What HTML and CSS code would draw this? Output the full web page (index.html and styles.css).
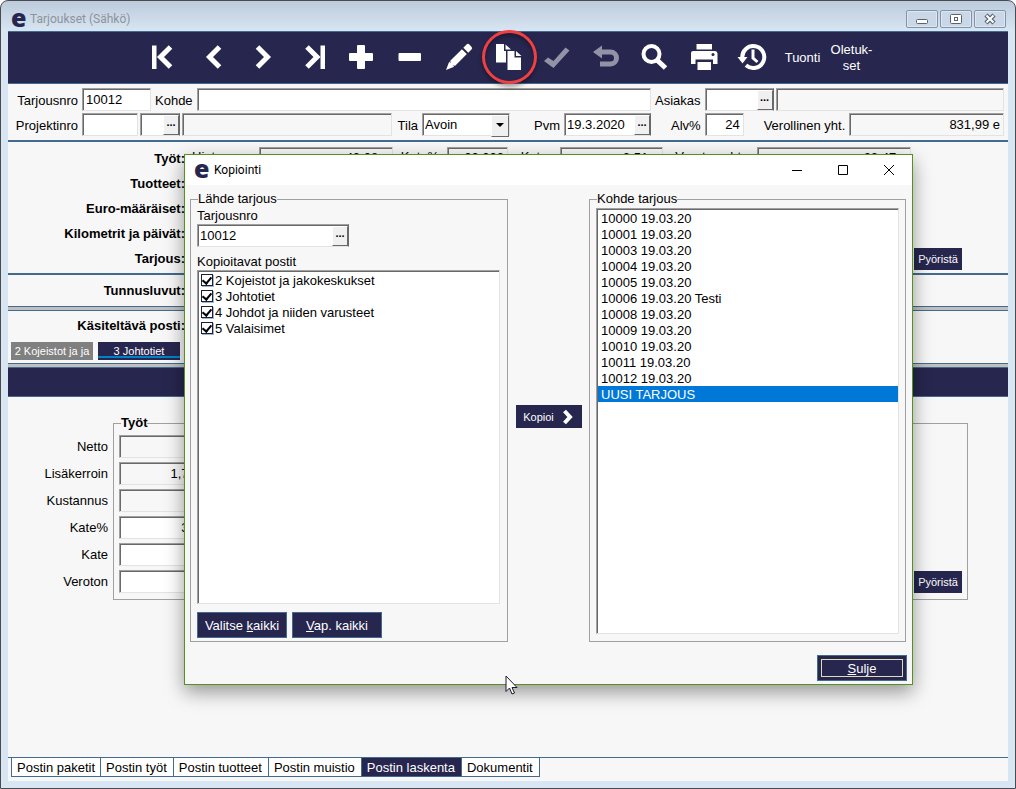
FILE: index.html
```html
<!DOCTYPE html>
<html lang="fi">
<head>
  <meta charset="UTF-8">
  <meta name="viewport" content="width=device-width, initial-scale=1">
  <title>Tarjoukset (Sähkö)</title>
  <link rel="stylesheet" href="styles.css">
</head>
<body>
  <div class="window">
    <header class="titlebar">
      <span class="logo">e</span>
      <h1>Tarjoukset (Sähkö)</h1>
      <div class="window-buttons">
        <button type="button" aria-label="Pienennä"><svg width="30" height="16" viewBox="0 0 30 16"><rect x="9.500" y="8.500" width="11" height="4" rx="1" fill="#fff" stroke="#5a6270"/></svg></button>
        <button type="button" aria-label="Suurenna"><svg width="30" height="16" viewBox="0 0 30 16"><rect x="9.500" y="3.500" width="11" height="9" rx="1" fill="#fff" stroke="#5a6270"/><rect x="13.500" y="6.500" width="3" height="3" fill="#fff" stroke="#5a6270"/></svg></button>
        <button type="button" aria-label="Sulje ikkuna"><svg width="30" height="16" viewBox="0 0 30 16"><path d="M11 4l8 8M19 4l-8 8" stroke="#5a6270" stroke-width="4.500"/><path d="M11.500 4.500l7 7M18.500 4.500l-7 7" stroke="#fff" stroke-width="2"/></svg></button>
      </div>
    </header>

    <nav class="toolbar">
      <button type="button" aria-label="Ensimmäinen"><svg viewBox="0 0 49 51"><path d="M11 13.500h4.500v23.500H11z"/><path class="line" d="M29.500 15l-10 10 10 10"/></svg></button>
      <button type="button" aria-label="Edellinen"><svg viewBox="0 0 49 51"><path class="line" d="M29.500 15l-10 10 10 10"/></svg></button>
      <button type="button" aria-label="Seuraava"><svg viewBox="0 0 49 51"><path class="line" d="M18.500 15l10 10-10 10"/></svg></button>
      <button type="button" aria-label="Viimeinen"><svg viewBox="0 0 49 51"><path class="line" d="M19 15l10 10-10 10"/><path d="M32.500 13.500H37V37h-4.500z"/></svg></button>
      <button type="button" aria-label="Lisää"><svg viewBox="0 0 49 51"><rect x="12" y="21" width="24" height="8" rx="1"/><rect x="20" y="13" width="8" height="24" rx="1"/></svg></button>
      <button type="button" aria-label="Poista"><svg viewBox="0 0 49 51"><rect x="12.500" y="21" width="22.500" height="8" rx="1"/></svg></button>
      <button type="button" aria-label="Muokkaa"><svg viewBox="0 0 49 51"><g transform="translate(11 38) rotate(-45)"><path d="M0 0l8-3.500v2l1.500-2H26v7H9.500L8 1.500v2z"/><path d="M28-3.500h4.500q2 0 2 2v3q0 2-2 2H28z"/></g></svg></button>
      <button type="button" aria-label="Kopioi tarjous"><svg viewBox="0 0 49 51"><path d="M12 12h8v7h2v11.500H12z"/><path d="M21.500 12.500l5.500 5h-5.500z"/><path d="M23.500 19h7v6.500h6.500V38H23.500z"/><path d="M32 19l5.500 5H32z"/></svg><span class="ring"></span></button>
      <button type="button" class="dim" aria-label="Tallenna"><svg viewBox="0 0 49 51"><path d="M11 29l4-3.500 5.500 3.500L32.500 15.500l4 3L20.500 36z"/></svg></button>
      <button type="button" class="dim" aria-label="Kumoa"><svg viewBox="0 0 49 51"><path d="M11 20l9-6.500v13z"/><path class="line" d="M18 20h10.500a6 6 0 0 1 0 12H18"/></svg></button>
      <button type="button" aria-label="Hae"><svg viewBox="0 0 49 51"><circle class="line thin" cx="20.500" cy="22" r="8"/><path class="line" d="M26.500 28.500l8 7.500"/></svg></button>
      <button type="button" aria-label="Tulosta"><svg viewBox="0 0 49 51"><path d="M16.500 12h15.500v5.500H16.500z"/><path d="M13 19h21.500a3 3 0 0 1 3 3v10h-4.500v-4.500H15.500V32H11V21a2 2 0 0 1 2-2z"/><path d="M17.500 30h13.500v8H17.500z"/><circle class="hole" cx="33" cy="22.500" r="1.500"/></svg></button>
      <button type="button" aria-label="Historia"><svg viewBox="0 0 49 51"><path class="line thin" d="M13.300 26a11 11 0 1 1 3.700 7.300"/><path d="M8.500 25h10l-5 6.500z"/><path class="line hand" d="M24 17.500v8.500l4.500 4"/></svg></button>
      <button type="button">Tuonti</button>
      <button type="button">Oletuk-<br>set</button>
    </nav>

    <form class="offer">
      <div class="offer-row">
        <label class="first" for="tarjousnro">Tarjousnro</label>
        <input class="field w-nro" id="tarjousnro" type="text" value="10012">
        <label for="kohde">Kohde</label>
        <input class="field grow" id="kohde" type="text">
        <div class="offer-right">
          <label for="asiakas">Asiakas</label>
          <span class="field pick w-nro"><input id="asiakas" type="text"><button type="button" aria-label="Valitse asiakas">...</button></span>
          <input class="field readonly grow snug" type="text" aria-label="Asiakkaan nimi" readonly>
        </div>
      </div>
      <div class="offer-row">
        <label class="first" for="projektinro">Projektinro</label>
        <input class="field w-prj" id="projektinro" type="text">
        <span class="field pick w-sub snug"><input type="text" aria-label="Alaprojekti"><button type="button" aria-label="Valitse projekti">...</button></span>
        <input class="field readonly grow snug" type="text" aria-label="Projektin nimi" readonly>
        <label class="lead-s" for="tila">Tila</label>
        <span class="drop"><select class="field" id="tila"><option>Avoin</option></select></span>
        <label class="lead-l" for="pvm">Pvm</label>
        <span class="field pick w-date"><input id="pvm" type="text" value="19.3.2020"><button type="button" aria-label="Valitse päivä">...</button></span>
        <div class="offer-right">
          <label class="lead-m" for="alv">Alv%</label>
          <input class="field num w-alv" id="alv" type="text" value="24">
          <label class="lead-m" for="yht">Verollinen yht.</label>
          <input class="field readonly num grow" id="yht" type="text" value="831,99 e" readonly>
        </div>
      </div>
    </form>

    <section class="totals">
      <div class="total-row">
        <b>Työt:</b>
        <label for="t1">Hinta</label><input class="field readonly num" id="t1" type="text" value="40,08 e" readonly>
        <label for="t2">Kate%</label><input class="field readonly num" id="t2" type="text" value="20,000" readonly>
        <label for="t3">Kate</label><input class="field readonly num" id="t3" type="text" value="2,51 e" readonly>
        <label for="t4">Veroton yht.</label><input class="field readonly num" id="t4" type="text" value="22,47 e" readonly>
      </div>
      <div class="total-row"><b>Tuotteet:</b></div>
      <div class="total-row"><b>Euro-määräiset:</b></div>
      <div class="total-row"><b>Kilometrit ja päivät:</b></div>
      <div class="total-row wide"><b>Tarjous:</b><button type="button" class="btn small">Pyöristä</button></div>
    </section>

    <section class="keys"><b>Tunnusluvut:</b></section>
    <div class="splitter"></div>

    <section class="current">
      <b>Käsiteltävä posti:</b>
      <div class="post-tabs">
        <button type="button">2 Kojeistot ja ja</button>
        <button type="button" class="active">3 Johtotiet</button>
      </div>
    </section>
    <div class="splitter"></div>
    <div class="band"></div>

    <section class="calc">
      <div class="calc-labels">
        <label for="netto">Netto</label>
        <label for="kerroin">Lisäkerroin</label>
        <label for="kustannus">Kustannus</label>
        <label for="katepros">Kate%</label>
        <label for="kate">Kate</label>
        <label for="veroton">Veroton</label>
      </div>
      <fieldset class="calc-work">
        <legend>Työt</legend>
        <input class="field readonly num" id="netto" type="text" readonly>
        <input class="field readonly num" id="kerroin" type="text" value="1,700" readonly>
        <input class="field readonly num" id="kustannus" type="text" readonly>
        <input class="field num" id="katepros" type="text" value="300">
        <input class="field num" id="kate" type="text">
        <input class="field num" id="veroton" type="text">
      </fieldset>
      <div class="calc-sum"><button type="button" class="btn small">Pyöristä</button></div>
    </section>

    <nav class="bottom-tabs">
      <a href="#">Postin paketit</a>
      <a href="#">Postin työt</a>
      <a href="#">Postin tuotteet</a>
      <a href="#">Postin muistio</a>
      <a href="#" class="active">Postin laskenta</a>
      <a href="#">Dokumentit</a>
    </nav>
  </div>

  <!-- Kopiointi-ikkuna -->
  <div class="dialog" role="dialog" aria-label="Kopiointi">
    <div class="dialog-title">
      <span class="logo">e</span>
      <h2>Kopiointi</h2>
      <button type="button" aria-label="Pienennä"><svg width="12" height="12" viewBox="0 0 12 12"><path d="M1 6.500h10"/></svg></button>
      <button type="button" aria-label="Suurenna"><svg width="12" height="12" viewBox="0 0 12 12"><path d="M1.500 1.500h9v9h-9z"/></svg></button>
      <button type="button" aria-label="Sulje ikkuna"><svg width="12" height="12" viewBox="0 0 12 12"><path d="M1 1l10 10M11 1L1 11"/></svg></button>
    </div>
    <div class="dialog-body">
      <fieldset class="source">
        <legend>Lähde tarjous</legend>
        <label for="lahde">Tarjousnro</label>
        <span class="field pick w-src"><input id="lahde" type="text" value="10012"><button type="button" aria-label="Valitse tarjous">...</button></span>
        <p>Kopioitavat postit</p>
        <div class="field checklist">
          <label><input type="checkbox" checked>2 Kojeistot ja jakokeskukset</label>
          <label><input type="checkbox" checked>3 Johtotiet</label>
          <label><input type="checkbox" checked>4 Johdot ja niiden varusteet</label>
          <label><input type="checkbox" checked>5 Valaisimet</label>
        </div>
        <div class="source-buttons">
          <button type="button" class="btn">Valitse <u>k</u>aikki</button>
          <button type="button" class="btn"><u>V</u>ap. kaikki</button>
        </div>
      </fieldset>
      <button type="button" class="btn small copy">Kopioi <svg width="12" height="16" viewBox="0 0 12 16"><path d="M2.500 2L8 8l-5.500 6" fill="none" stroke="#fff" stroke-width="4"/></svg></button>
      <fieldset class="target">
        <legend>Kohde tarjous</legend>
        <select class="field" size="12" aria-label="Kohde tarjous">
          <option>10000 19.03.20</option>
          <option>10001 19.03.20</option>
          <option>10003 19.03.20</option>
          <option>10004 19.03.20</option>
          <option>10005 19.03.20</option>
          <option>10006 19.03.20 Testi</option>
          <option>10008 19.03.20</option>
          <option>10009 19.03.20</option>
          <option>10010 19.03.20</option>
          <option>10011 19.03.20</option>
          <option>10012 19.03.20</option>
          <option selected>UUSI TARJOUS</option>
        </select>
      </fieldset>
    </div>
    <div class="dialog-footer">
      <button type="button" class="btn default"><u>S</u>ulje</button>
    </div>
  </div>

  <svg class="cursor" width="13" height="20" viewBox="0 0 13 20"><path d="M1 1v15.500l3.500-3.500 2.500 6 2.500-1-2.500-5.500h5z" fill="#fff" stroke="#1a1a2a"/></svg>
</body>
</html>
```

FILE: styles.css
```css
* {
  box-sizing: border-box;
}

body {
  margin: 0;
  font: 13px/16px "Liberation Sans", Arial, sans-serif;
  color: #000;
  background: #fff;
}

button, input, select {
  font: inherit;
  color: inherit;
  margin: 0;
}

.window {
  display: flex;
  flex-direction: column;
  min-height: 100vh;
  padding: 0 7px 7px;
  border: 1px solid #4b4b4f;
  border-radius: 8px 8px 0 0;
  background: linear-gradient(#bccbdc, #d8e5f2 30px);
}

.window > * {
  background: #f7f7f7;
}

.logo {
  width: 14px;
  font: 800 25px/24px "Open Sans", sans-serif;
  color: #27264e;
}

/* Otsikkorivi */
.window .titlebar {
  display: flex;
  align-items: center;
  height: 30px;
  padding: 6px 2px 0 3px;
  background: none;
}

.titlebar .logo {
  margin-top: -5px;
}

.titlebar h1 {
  flex: 1;
  margin: 0 0 0 5px;
  font: 12px/16px Roboto, sans-serif;
  color: #8d939b;
}

.window-buttons {
  display: flex;
  gap: 2px;
}

.window-buttons button {
  display: flex;
  width: 32px;
  height: 18px;
  padding: 0;
  border: 1px solid #8493a8;
  border-radius: 2px;
  background: #c9d7e6;
  box-shadow: inset 0 0 0 1px #dde7f1;
}

/* Työkalurivi */
.window .toolbar {
  display: flex;
  height: 53px;
  padding-left: 133px;
  border-top: 1px solid #436a8f;
  border-bottom: 1px solid #436a8f;
  background: #27264e;
}

.toolbar button {
  position: relative;
  width: 49px;
  height: 51px;
  padding: 0;
  border: 0;
  background: none;
  color: #fff;
}

.toolbar svg {
  display: block;
  width: 49px;
  height: 51px;
  fill: #fff;
  stroke: none;
}

.toolbar .line {
  fill: none;
  stroke: #fff;
  stroke-width: 5;
}

.toolbar .thin {
  stroke-width: 4;
}

.toolbar .hand {
  stroke-width: 3;
}

.toolbar .hole {
  fill: #27264e;
}

.toolbar .dim {
  opacity: 0.5;
}

.ring {
  position: absolute;
  left: -2px;
  top: -2px;
  z-index: 1;
  width: 55px;
  height: 54px;
  border: 3px solid #f23f40;
  border-radius: 50%;
  box-shadow: 0 3px 4px rgba(0, 0, 0, 0.35), inset 0 3px 4px rgba(0, 0, 0, 0.3);
}

/* Kentät */
.field {
  height: 23px;
  padding: 0 3px;
  border: 1px solid;
  border-color: #a0a0a0 #e3e3e3 #e3e3e3 #a0a0a0;
  border-radius: 0;
  background: #fff;
  box-shadow: inset 1px 1px #696969;
  outline: none;
}

.readonly {
  background: #f7f7f7;
}

.num {
  text-align: right;
}

.pick {
  display: flex;
  padding: 1px 0 0 1px;
  border-right-color: #696969;
}

.pick input {
  flex: 1;
  width: 0;
  min-width: 0;
  padding: 0 1px;
  border: 0;
  background: none;
  outline: none;
}

.pick button {
  width: 16px;
  padding: 0 0 6px;
  border: 1px solid;
  border-color: #fff #696969 #696969 #fff;
  background: #f0f0f0;
  font-size: 11px;
  font-weight: bold;
  line-height: 10px;
}

.drop {
  position: relative;
  width: 88px;
}

.drop select {
  display: block;
  width: 100%;
  padding: 0 2px;
  appearance: none;
}

.drop::before {
  content: "";
  position: absolute;
  right: 1px;
  top: 2px;
  width: 16px;
  height: 20px;
  border: 1px solid;
  border-color: #fff #696969 #696969 #fff;
  background: #f0f0f0;
  pointer-events: none;
}

.drop::after {
  content: "";
  position: absolute;
  right: 6px;
  top: 10px;
  border: 4px solid transparent;
  border-top-color: #000;
  border-bottom: 0;
  pointer-events: none;
}

.grow {
  flex: 1;
  min-width: 0;
}

.w-nro { width: 69px; }
.w-prj { width: 56px; }
.w-sub { width: 40px; }
.w-date { width: 87px; }
.w-alv { width: 39px; }
.w-src { width: 152px; }

.btn {
  width: 90px;
  height: 26px;
  padding: 2px 0 0;
  border: 1px solid #436a8f;
  background: #27264e;
  color: #fff;
}

.btn.small {
  width: 48px;
  height: 22px;
  padding: 0;
  border: 0;
  font-size: 11px;
}

/* Tarjouksen tiedot */
.offer {
  display: flex;
  flex-direction: column;
  gap: 2px;
  padding: 4px 4px 4px 0;
  border-bottom: 2px solid #436a8f;
}

.offer-row {
  display: flex;
  align-items: center;
  gap: 4px;
}

.offer-row label {
  padding-top: 2px;
}

.offer-row .first {
  width: 70px;
  text-align: right;
}

.offer-right {
  display: flex;
  align-items: center;
  gap: 4px;
  width: 349px;
}

.snug { margin-left: -2px; }
.lead-s { margin-left: 2px; }
.lead-m { margin-left: 16px; }
.lead-l { margin-left: 20px; }

/* Yhteenveto */
.totals {
  padding: 4px 0 2px;
  border-bottom: 2px solid #436a8f;
}

.total-row {
  display: grid;
  grid-template-columns: 177px 74px 134px 54px 61px 52px 103px 94px 154px;
  height: 25px;
  align-items: center;
}

.total-row b, .keys b, .current b {
  width: 177px;
  text-align: right;
}

.total-row label {
  padding-bottom: 3px;
  text-align: center;
}

.total-row b + label {
  padding-left: 7px;
  text-align: left;
}

.total-row .field {
  width: 100%;
  padding-bottom: 3px;
}

.total-row.wide {
  display: flex;
  justify-content: space-between;
  padding-right: 46px;
}

.keys {
  display: flex;
  align-items: center;
  height: 31px;
}

.window .splitter {
  height: 5px;
  border-top: 1px solid #436a8f;
  border-bottom: 1px solid #436a8f;
  background: #c0c0c0;
}

.current {
  height: 52px;
  padding-top: 7px;
}

.current b {
  display: block;
}

.post-tabs {
  display: flex;
  gap: 5px;
  padding: 8px 3px 0;
}

.post-tabs button {
  width: 82px;
  height: 18px;
  padding: 0;
  border: 0;
  background: #808080;
  color: #fff;
  font-size: 11px;
}

.post-tabs .active {
  background: linear-gradient(#27264e 14px, #0082c8 14px, #0082c8 16px, #27264e 16px);
}

.window .band {
  height: 29px;
  border-bottom: 1px solid #436a8f;
  background: #27264e;
}

/* Laskenta */
.calc {
  flex: 1;
  display: flex;
  align-items: flex-start;
  padding: 18px 40px 0 0;
}

.calc-labels {
  width: 100px;
  padding-top: 18px;
  text-align: right;
}

.calc-labels label {
  display: block;
  line-height: 27px;
}

fieldset {
  min-width: 0;
  margin: 0;
  border: 1px solid #a0a0a0;
}

legend {
  padding: 0;
}

.calc-work {
  display: flex;
  flex-direction: column;
  gap: 4px;
  width: 250px;
  margin-left: 5px;
  padding: 4px 5px 6px;
}

.calc-work legend {
  margin-left: 2px;
  font-weight: bold;
}

.calc-work .field {
  width: 88px;
}

.calc-sum {
  flex: 1;
  display: flex;
  align-items: flex-end;
  justify-content: flex-end;
  height: 177px;
  margin: 8px 0 0 20px;
  padding: 0 5px 6px;
  border: 1px solid #a0a0a0;
}

.bottom-tabs {
  display: flex;
  height: 24px;
  padding: 0 3px 4px;
  border-top: 1px solid #436a8f;
}

.bottom-tabs a {
  padding: 2px 6px 0 5px;
  border: 1px solid #436a8f;
  border-width: 0 1px 1px 0;
  background: #fff;
  color: #000;
  text-decoration: none;
}

.bottom-tabs a:first-child {
  padding-right: 5px;
  border-left-width: 1px;
}

.bottom-tabs .active {
  background: #27264e;
  color: #fff;
}

/* Kopiointi-ikkuna */
.dialog {
  position: absolute;
  left: 184px;
  top: 154px;
  display: flex;
  flex-direction: column;
  width: 729px;
  height: 531px;
  border: 1px solid #56901d;
  background: #f7f7f7;
  box-shadow: 0 7px 18px rgba(0, 0, 0, 0.4);
}

.dialog-title {
  display: flex;
  align-items: center;
  height: 30px;
  padding-left: 9px;
  background: #fff;
}

.dialog-title .logo {
  margin-top: -5px;
}

.dialog-title h2 {
  flex: 1;
  margin: 0 0 0 6px;
  font: 12px/16px Roboto, sans-serif;
}

.dialog-title button {
  width: 46px;
  height: 30px;
  padding: 0;
  border: 0;
  background: none;
}

.dialog-title svg {
  display: block;
  margin: 0 auto;
  fill: none;
  stroke: #000;
}

.dialog-body {
  flex: 1;
  display: flex;
  align-items: center;
  justify-content: space-between;
  padding: 6px 6px 0 5px;
}

.dialog-body fieldset {
  display: flex;
  flex-direction: column;
  align-self: stretch;
  width: 318px;
  padding: 1px 6px 7px;
}

.dialog-body legend {
  margin-left: 1px;
}

.dialog-body p {
  margin: 7px 0 0;
}

.checklist {
  flex: 1;
  width: 303px;
  padding: 2px;
}

.checklist label {
  display: flex;
  align-items: center;
  height: 16px;
}

.checklist input {
  appearance: none;
  width: 12px;
  height: 12px;
  margin: 0 2px 2px 1px;
  border: 1px solid #1c1c3c;
  background: #fff;
  box-shadow: 1px 1px #9fb6cf;
}

.checklist input:checked::before {
  content: "";
  display: block;
  width: 4px;
  height: 7px;
  margin: 0 auto;
  border: solid #000;
  border-width: 0 2px 2px 0;
  transform: rotate(40deg);
}

.source-buttons {
  display: flex;
  gap: 5px;
  margin: 8px 0 -4px;
}

.btn.copy {
  display: flex;
  align-items: center;
  justify-content: center;
  gap: 8px;
  width: 66px;
  height: 23px;
}

.dialog-body .target {
  width: 317px;
}

.target select {
  flex: 1;
  padding: 1px 0 1px 1px;
  overflow: hidden;
}

.target option {
  height: 16px;
  min-height: 16px;
  padding: 1px 3px 0;
}

.target option:checked {
  background: #0078d7 linear-gradient(#0078d7, #0078d7);
  color: #fff;
}

.dialog-footer {
  display: flex;
  justify-content: flex-end;
  padding: 13px 5px 3px;
}

.btn.default {
  outline: 1px solid #e0dcb4;
  outline-offset: -5px;
}

.cursor {
  position: absolute;
  left: 505px;
  top: 675px;
}
```
